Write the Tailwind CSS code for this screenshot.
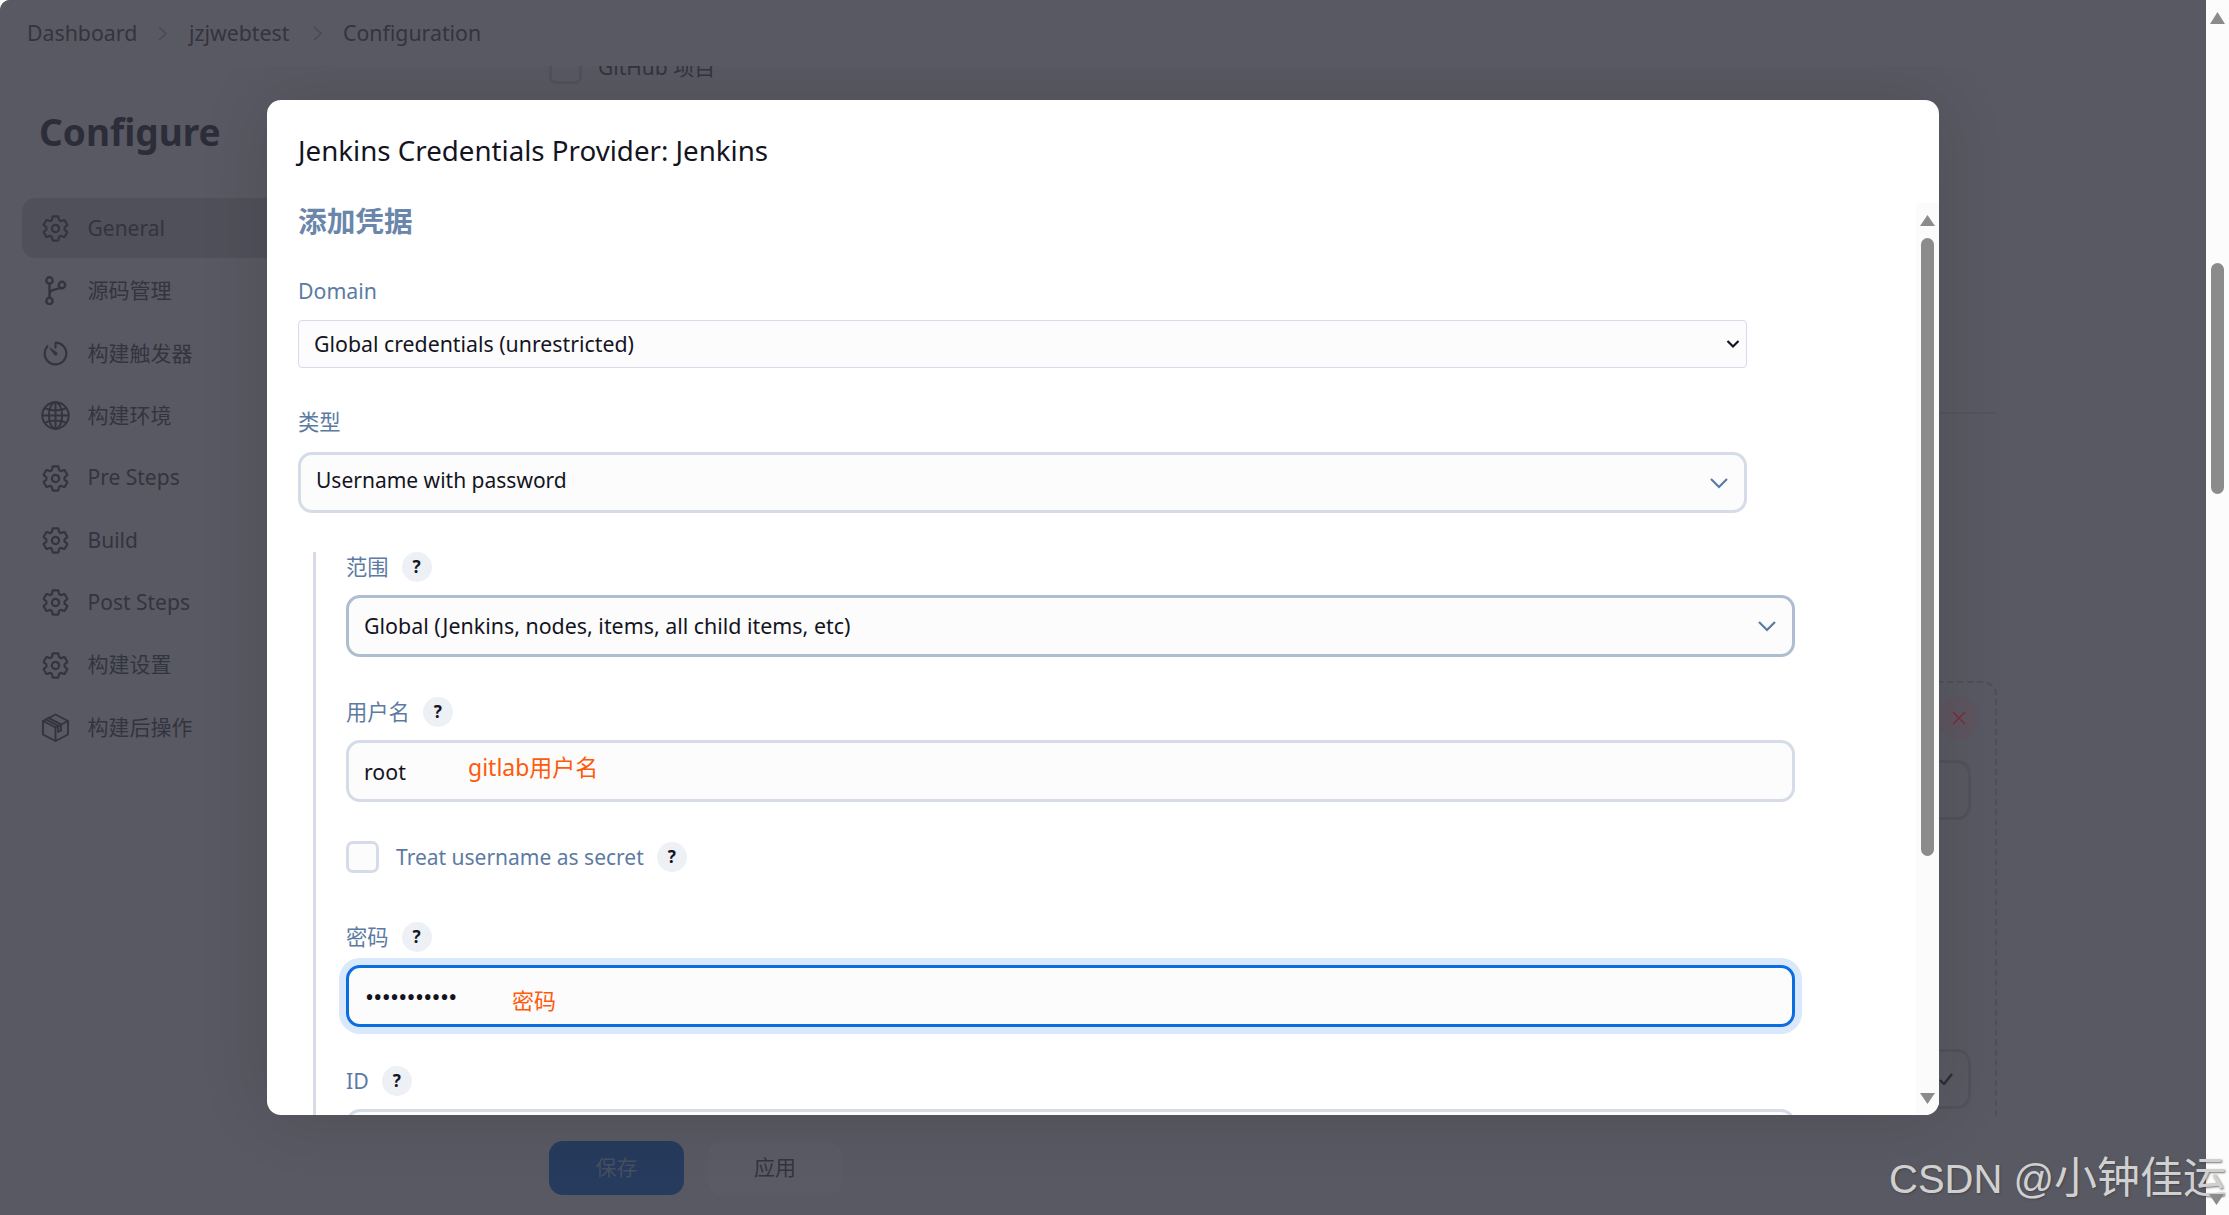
<!DOCTYPE html>
<html lang="zh">
<head>
<meta charset="utf-8">
<title>Configure</title>
<script src="https://cdn.jsdelivr.net/npm/@tailwindcss/browser@4"></script>
</head>
<body class="[font-family:'Noto_Sans','Noto_Sans_CJK_SC',sans-serif]">
<svg class="hidden" width="0" height="0">
  <symbol id="gear" viewBox="0 0 512 512"><path fill="none" stroke="currentColor" stroke-width="38" stroke-linecap="round" stroke-linejoin="round" d="M262.29 192.31a64 64 0 1057.4 57.4 64.13 64.13 0 00-57.4-57.4zM416.39 256a154.34 154.34 0 01-1.53 20.79l45.21 35.46a10.81 10.81 0 012.45 13.75l-42.77 74a10.81 10.81 0 01-13.14 4.59l-44.9-18.08a16.11 16.11 0 00-15.17 1.75A164.48 164.48 0 01325 400.8a15.94 15.94 0 00-8.82 12.14l-6.73 47.89a11.08 11.08 0 01-10.68 9.17h-85.54a11.11 11.11 0 01-10.69-8.87l-6.72-47.82a16.07 16.07 0 00-9-12.22 155.3 155.3 0 01-21.46-12.57 16 16 0 00-15.11-1.71l-44.89 18.07a10.81 10.81 0 01-13.14-4.58l-42.77-74a10.8 10.8 0 012.45-13.75l38.21-30a16.05 16.05 0 006-14.08c-.36-4.17-.58-8.33-.58-12.5s.21-8.27.58-12.35a16 16 0 00-6.07-13.94l-38.19-30A10.81 10.81 0 0149.48 186l42.77-74a10.81 10.81 0 0113.14-4.59l44.9 18.08a16.11 16.11 0 0015.17-1.75A164.48 164.48 0 01187 111.2a15.94 15.94 0 008.82-12.14l6.73-47.89A11.08 11.08 0 01213.23 42h85.54a11.11 11.11 0 0110.69 8.87l6.72 47.82a16.07 16.07 0 009 12.22 155.3 155.3 0 0121.46 12.57 16 16 0 0015.11 1.71l44.89-18.07a10.81 10.81 0 0113.14 4.58l42.77 74a10.8 10.8 0 01-2.45 13.75l-38.21 30a16.05 16.05 0 00-6.07 14.08c.33 4.14.55 8.3.55 12.47z"/></symbol>
  <symbol id="branch" viewBox="0 0 29 29"><g fill="none" stroke="currentColor" stroke-width="2.400" stroke-linecap="round"><circle cx="8.500" cy="4.500" r="3.200"/><circle cx="21" cy="9" r="3.200"/><circle cx="8.500" cy="25" r="3.200"/><path d="M8.500 7.800V21.700M8.500 19.500c0-4.500 2-5 6-6.200 3-.9 5.200-1.300 6-1"/></g></symbol>
  <symbol id="timer" viewBox="0 0 512 512"><path fill="none" stroke="currentColor" stroke-width="38" stroke-linecap="round" stroke-linejoin="round" d="M112.91 128A191.85 191.85 0 0064 254c-1.18 106.35 85.65 193.8 192 194 106.2.2 192-85.83 192-192 0-104.54-83.55-189.61-187.5-192a4.36 4.36 0 00-4.5 4.37V152"/><path fill="currentColor" d="M233.38 278.63l-79-113a8.13 8.13 0 0111.32-11.32l113 79a32.5 32.5 0 01-37.25 53.26 33.21 33.21 0 01-8.07-7.94z"/></symbol>
  <symbol id="globe" viewBox="0 0 29 29"><g fill="none" stroke="currentColor" stroke-width="2"><circle cx="14.500" cy="14.500" r="13.200"/><ellipse cx="14.500" cy="14.500" rx="6.600" ry="13.200"/><path d="M14.500 1.300V27.700M1.300 14.500H27.700M3.600 7.200c6 3 15.800 3 21.800 0M3.600 21.800c6-3 15.800-3 21.800 0"/></g></symbol>
  <symbol id="cube" viewBox="0 0 29 29"><g fill="none" stroke="currentColor" stroke-width="1.900" stroke-linejoin="round" stroke-linecap="round"><path d="M14.500 1.500L27 8v13.500l-12.500 6.500L2 21.500V8z"/><path d="M2 8l12.500 6.500L27 8M14.500 14.500V28M7.500 4.800l12.500 6.600v6.100l-2.800 1.400v-6L4.800 6.300"/></g></symbol>
</svg>

<div class="relative flex w-[2229px] h-[1215px] overflow-hidden bg-[#fcfcfc]">
  <!-- dimmed page -->
  <div class="flex flex-col w-[2206px] h-full rounded-tl-[10px] overflow-hidden bg-[#595963] text-[#33343f]">
    <header class="relative z-10 flex items-center h-[66px] shrink-0 pl-[27px] bg-[#595963] text-[21.300px]">
      <span class="w-[110px]">Dashboard</span>
      <svg class="ml-[20px] text-[#474955]" width="11" height="17" viewBox="0 0 11 17"><path d="M2 2l7 6.500-7 6.500" fill="none" stroke="currentColor" stroke-width="1.500"/></svg>
      <span class="ml-[21px] w-[102px]">jzjwebtest</span>
      <svg class="ml-[21px] text-[#474955]" width="11" height="17" viewBox="0 0 11 17"><path d="M2 2l7 6.500-7 6.500" fill="none" stroke="currentColor" stroke-width="1.500"/></svg>
      <span class="ml-[20px]">Configuration</span>
    </header>
    <div class="flex flex-1 min-h-0">
      <aside class="w-[267px] shrink-0 pl-[22px] pt-[36px]">
        <h1 class="ml-[17px] h-[60px] mb-[36px] flex items-center text-[37px] font-bold text-[#2c2d38]">Configure</h1>
        <nav class="flex flex-col gap-[2.400px] text-[21px]">
          <a class="flex items-center gap-[17.500px] h-[60px] pl-[19px] pt-[1px] rounded-l-[14px] bg-[#50505a]"><svg class="w-[29px] h-[29px]"><use href="#gear"/></svg>General</a>
          <a class="flex items-center gap-[17.500px] h-[60px] pl-[19px] pt-[1px]"><svg class="w-[29px] h-[29px]"><use href="#branch"/></svg>源码管理</a>
          <a class="flex items-center gap-[17.500px] h-[60px] pl-[19px] pt-[1px]"><svg class="w-[29px] h-[29px]"><use href="#timer"/></svg>构建触发器</a>
          <a class="flex items-center gap-[17.500px] h-[60px] pl-[19px] pt-[1px]"><svg class="w-[29px] h-[29px]"><use href="#globe"/></svg>构建环境</a>
          <a class="flex items-center gap-[17.500px] h-[60px] pl-[19px] pt-[1px]"><svg class="w-[29px] h-[29px]"><use href="#gear"/></svg>Pre Steps</a>
          <a class="flex items-center gap-[17.500px] h-[60px] pl-[19px] pt-[1px]"><svg class="w-[29px] h-[29px]"><use href="#gear"/></svg>Build</a>
          <a class="flex items-center gap-[17.500px] h-[60px] pl-[19px] pt-[1px]"><svg class="w-[29px] h-[29px]"><use href="#gear"/></svg>Post Steps</a>
          <a class="flex items-center gap-[17.500px] h-[60px] pl-[19px] pt-[1px]"><svg class="w-[29px] h-[29px]"><use href="#gear"/></svg>构建设置</a>
          <a class="flex items-center gap-[17.500px] h-[60px] pl-[19px] pt-[1px]"><svg class="w-[29px] h-[29px]"><use href="#cube"/></svg>构建后操作</a>
        </nav>
      </aside>
      <main class="relative flex-1 flex flex-col pl-[282px] pb-[20px]">
        <div class="flex items-center gap-[16px] -mt-[14px] text-[21px]">
          <span class="w-[33px] h-[32px] rounded-[7px] border-[3px] border-[#52525c]"></span>
          <span>GitHub 项目</span>
        </div>
        <div class="mt-auto flex gap-[24px] text-[21px]">
          <button class="w-[135px] h-[54px] rounded-[14px] bg-[#263b5d] text-[#464f60]">保存</button>
          <button class="w-[134px] h-[54px] rounded-[14px] bg-[#5b5b65] text-[#33343f]">应用</button>
        </div>
        <!-- fragments of the page that stick out beside the dialog -->
        <div class="absolute left-[1672px] top-[346px] w-[58px] border-t-2 border-[#54545e]"></div>
        <div class="absolute left-[1600px] top-[615px] w-[130px] h-[436px] rounded-tr-[14px] border-t-2 border-r-2 border-dashed border-[#4f4f59]"></div>
        <div class="absolute left-[1671px] top-[631px] w-[42px] h-[42px] rounded-full bg-[#5d555f] flex items-center justify-center text-[#7a2f40]">
          <svg width="16" height="16" viewBox="0 0 16 16"><path d="M2 2l12 12M14 2L2 14" stroke="currentColor" stroke-width="1.600"/></svg>
        </div>
        <div class="absolute left-[1600px] top-[694px] w-[104px] h-[60px] rounded-[14px] border-[3px] border-[#52525c]"></div>
        <div class="absolute left-[1600px] top-[983px] w-[104px] h-[60px] rounded-[14px] border-[3px] border-[#52525c] flex items-center justify-end pr-[15px] text-[#2c2d38]">
          <svg width="14" height="12" viewBox="0 0 14 12"><path d="M1 7l4 4 8-10" fill="none" stroke="currentColor" stroke-width="2.400"/></svg>
        </div>
      </main>
    </div>
  </div>

  <!-- page scrollbar -->
  <div class="relative w-[23px] h-full flex flex-col items-center pt-[12px] bg-[#fcfcfc]">
    <svg width="15" height="12" viewBox="0 0 15 12"><path d="M7.500 0L15 12H0z" fill="#8b8b8b"/></svg>
    <div class="mt-[239px] w-[13px] h-[231px] rounded-full bg-[#8b8b8b]"></div>
  </div>

  <!-- dialog -->
  <section class="absolute left-[267px] top-[100px] w-[1672px] h-[1015px] flex flex-col rounded-[14px] overflow-hidden bg-white shadow-[0_0_70px_rgba(0,0,0,0.12)] text-[#14141f]">
    <h2 class="h-[103px] shrink-0 pl-[31px] pt-[32px] text-[27.700px] leading-[36px]">Jenkins Credentials Provider: Jenkins</h2>
    <div class="flex flex-1 min-h-0">
      <div class="flex-1 min-w-0 overflow-hidden -mt-[12px] pt-[12px] pl-[31px] text-[21.300px]">
        <h3 class="h-[36px] pt-[3px] leading-[30px] text-[28.700px] font-bold text-[#6a87ab]">添加凭据</h3>
        <label class="block mt-[37px] h-[30px] leading-[30px] text-[#5c7ba3]">Domain</label>
        <div class="mt-[14px] flex items-center justify-between w-[1449px] h-[48px] pl-[15px] pr-[6px] rounded-[4px] border-[1.500px] border-[#d6dde9] bg-[#fcfcfd]">
          <span>Global credentials (unrestricted)</span>
          <svg width="14" height="10" viewBox="0 0 14 10"><path d="M1.500 2l5.500 5.500L12.500 2" fill="none" stroke="#14141f" stroke-width="2.200"/></svg>
        </div>
        <label class="block mt-[39px] h-[30px] leading-[30px] text-[#5c7ba3]">类型</label>
        <div class="mt-[15px] flex items-center justify-between w-[1449px] h-[61px] pl-[15px] pr-[16px] rounded-[14px] border-[3px] border-[#d5dce8] bg-[#fcfcfd]">
          <span class="-mt-[3px] text-[21px]">Username with password</span>
          <svg width="18" height="12" viewBox="0 0 18 12"><path d="M1 2l8 8 8-8" fill="none" stroke="#5a7aa3" stroke-width="2.200"/></svg>
        </div>

        <div class="mt-[39px] ml-[15px] pl-[30px] border-l-[3px] border-[#d5dce8]">
          <div class="flex items-center gap-[13px] h-[30px] text-[#5c7ba3]">范围<span class="flex items-center justify-center w-[30px] h-[30px] rounded-full bg-[#edf0f4] text-[#14141f] text-[17px] font-bold">?</span></div>
          <div class="mt-[13px] flex items-center justify-between w-[1449px] h-[62px] pl-[15px] pr-[16px] rounded-[14px] border-[3px] border-[#aebdd0] bg-[#fcfcfd]">
            <span class="text-[21.400px]">Global (Jenkins, nodes, items, all child items, etc)</span>
            <svg width="18" height="12" viewBox="0 0 18 12"><path d="M1 2l8 8 8-8" fill="none" stroke="#5a7aa3" stroke-width="2.200"/></svg>
          </div>

          <div class="mt-[40px] flex items-center gap-[13px] h-[30px] text-[#5c7ba3]">用户名<span class="flex items-center justify-center w-[30px] h-[30px] rounded-full bg-[#edf0f4] text-[#14141f] text-[17px] font-bold">?</span></div>
          <div class="relative mt-[13px] flex items-center w-[1449px] h-[62px] pl-[15px] pt-[2px] rounded-[14px] border-[3px] border-[#d5dce8] bg-[#fcfcfd]">
            root
            <span class="absolute left-[119px] top-[7px] text-[23px] leading-[34px] text-[#ff5a0a]">gitlab用户名</span>
          </div>

          <div class="mt-[39px] flex items-center h-[32px]">
            <span class="w-[33px] h-[32px] rounded-[7px] border-[3px] border-[#d5dce8] bg-[#fcfcfd]"></span>
            <span class="ml-[17px] pt-[1px] text-[21px] text-[#5c7ba3]">Treat username as secret</span>
            <span class="ml-[13px] flex items-center justify-center w-[30px] h-[30px] rounded-full bg-[#edf0f4] text-[#14141f] text-[17px] font-bold">?</span>
          </div>

          <div class="mt-[49px] flex items-center gap-[13px] h-[30px] text-[#5c7ba3]">密码<span class="flex items-center justify-center w-[30px] h-[30px] rounded-full bg-[#edf0f4] text-[#14141f] text-[17px] font-bold">?</span></div>
          <div class="relative mt-[13px] flex items-center w-[1449px] h-[62px] pl-[16px] rounded-[14px] border-[3px] border-[#0a6ee0] bg-[#fcfcfd] shadow-[0_0_0_7px_#d9e9fb]">
            <span class="mt-[1px] text-[24px] tracking-[-0.700px]">•••••••••••</span>
            <span class="absolute left-[163px] top-[17px] text-[22px] leading-[30px] text-[#ff5a0a]">密码</span>
          </div>

          <div class="mt-[39px] flex items-center gap-[13px] h-[30px] text-[#5c7ba3]">ID<span class="flex items-center justify-center w-[30px] h-[30px] rounded-full bg-[#edf0f4] text-[#14141f] text-[17px] font-bold">?</span></div>
          <div class="mt-[13px] w-[1449px] h-[62px] rounded-[14px] border-[3px] border-[#d5dce8] bg-[#fcfcfd]"></div>
        </div>
      </div>
      <!-- dialog scrollbar -->
      <div class="w-[23px] shrink-0 flex flex-col items-center pt-[12px] bg-[#fbfbfb]">
        <svg width="15" height="11" viewBox="0 0 15 11"><path d="M7.500 0L15 11H0z" fill="#8b8b8b"/></svg>
        <div class="mt-[12px] w-[13px] h-[618px] rounded-full bg-[#8b8b8b]"></div>
        <svg class="mt-[237px]" width="15" height="11" viewBox="0 0 15 11"><path d="M7.500 11L15 0H0z" fill="#8b8b8b"/></svg>
      </div>
    </div>
  </section>

  <!-- watermark -->
  <div class="absolute left-[1889px] top-[1153px] whitespace-nowrap text-[40px] leading-[50px] text-[#d0d0d0] [font-family:'Liberation_Sans','Noto_Sans_CJK_SC',sans-serif] [text-shadow:1px_1px_2px_rgba(60,60,60,0.7)]">CSDN @<span class="text-[43px]">小钟佳运</span></div>
  <svg class="absolute left-[2209px] top-[1194px]" width="15" height="11" viewBox="0 0 15 11"><path d="M7.500 11L15 0H0z" fill="#8b8b8b"/></svg>
</div>
</body>
</html>
